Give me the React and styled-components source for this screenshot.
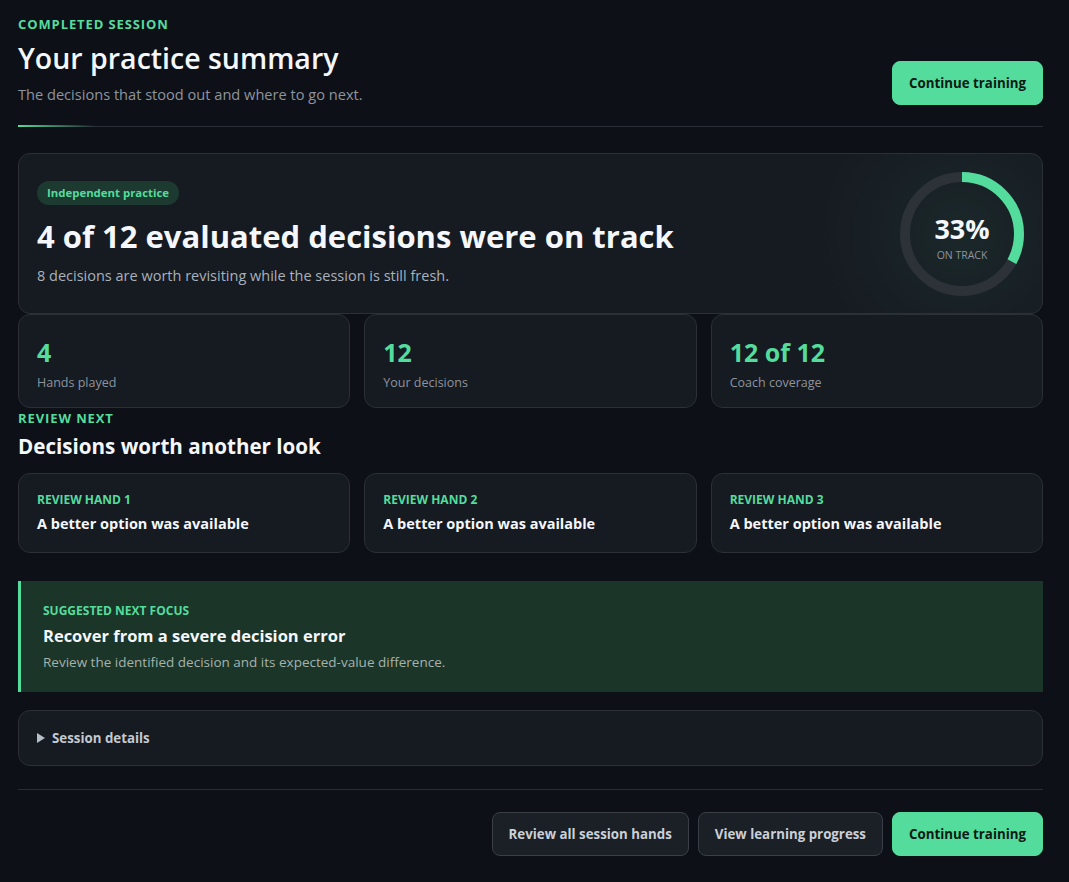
import React from "react";
import styled, { createGlobalStyle } from "styled-components";

const GlobalStyle = createGlobalStyle`
  * { box-sizing: border-box; }
  body {
    margin: 0;
    background: #0d1017;
    color: #f4f7fb;
    font-family: "Segoe UI", "Open Sans", "Noto Sans", sans-serif;
  }
`;

const green = "#54dc9d";

const Page = styled.main`
  padding: 14px 26px 26px 18px;
`;

const Header = styled.header`
  position: relative;
  display: flex;
  justify-content: space-between;
  align-items: flex-end;
  padding-bottom: 22px;
  border-bottom: 1px solid #2a2e36;
  &::after {
    content: "";
    position: absolute;
    left: 0;
    bottom: -1px;
    width: 78px;
    height: 2px;
    background: linear-gradient(90deg, ${green}, rgba(84, 220, 157, 0));
  }
`;

const Eyebrow = styled.div`
  color: ${green};
  font-size: 13px;
  font-weight: 700;
  letter-spacing: 0.9px;
  line-height: 20px;
  text-transform: uppercase;
`;

const Title = styled.h1`
  margin: 5px 0 7px;
  font-size: 28.5px;
  font-weight: 600;
  line-height: 38px;
`;

const Subtitle = styled.p`
  margin: 0;
  font-size: 14.6px;
  line-height: 20px;
  color: #8d949e;
`;

const Button = styled.button`
  height: 44px;
  margin-bottom: -1px;
  padding: 0 16px;
  border-radius: 8px;
  font-family: inherit;
  font-size: 13.3px;
  font-weight: 700;
  cursor: pointer;
  border: 1px solid ${(p) => (p.$primary ? green : "#3a3f47")};
  background: ${(p) => (p.$primary ? green : "#1b1f26")};
  color: ${(p) => (p.$primary ? "#0c1a13" : "#c9d0d8")};
`;

const Card = styled.section`
  background: #161a21;
  border: 1px solid #2a2f38;
  border-radius: 12px;
`;

const Hero = styled(Card)`
  margin-top: 26px;
  display: flex;
  align-items: center;
  justify-content: space-between;
  padding: 18px 18px 17px;
  background: radial-gradient(circle at 92% 50%, rgba(84, 220, 157, 0.07), rgba(84, 220, 157, 0) 150px), #161a21;
`;

const HeroBody = styled.div`
  display: flex;
  flex-direction: column;
  align-items: flex-start;
`;

const Badge = styled.span`
  height: 24px;
  padding: 0 10px;
  border-radius: 12px;
  background: #1c3a30;
  color: ${green};
  font-size: 11.4px;
  font-weight: 700;
  line-height: 24px;
`;

const HeroTitle = styled.h2`
  margin: 11px 0 9px;
  font-size: 31px;
  font-weight: 700;
  line-height: 40px;
`;

const HeroText = styled.p`
  margin: 0;
  font-size: 14.5px;
  line-height: 22px;
  color: #a9b1bb;
`;

const Ring = styled.div`
  position: relative;
  width: 124px;
  height: 124px;
  flex-shrink: 0;
`;

const RingLabel = styled.div`
  position: absolute;
  inset: 0;
  padding-top: 6px;
  display: flex;
  flex-direction: column;
  align-items: center;
  justify-content: center;
  strong {
    font-size: 27px;
    font-weight: 700;
    line-height: 32px;
  }
  span {
    margin-top: 3px;
    font-size: 10.5px;
    color: #8d949e;
    text-transform: uppercase;
    line-height: 14px;
  }
`;

const Grid = styled.div`
  display: grid;
  grid-template-columns: repeat(3, 1fr);
  gap: 14px;
`;

const StatCard = styled(Card)`
  padding: 22px 18px 15px;
`;

const StatValue = styled.div`
  color: ${green};
  font-size: 25px;
  font-weight: 700;
  line-height: 30px;
`;

const StatLabel = styled.div`
  margin-top: 7px;
  font-size: 12.5px;
  line-height: 18px;
  color: #8d949e;
`;

const SectionTitle = styled.h3`
  margin: 4px 0 13px;
  font-size: 20.6px;
  font-weight: 700;
  line-height: 28px;
`;

const ReviewCard = styled(Card)`
  padding: 18px;
`;

const SmallLabel = styled.div`
  color: ${green};
  font-size: 12px;
  font-weight: 700;
  line-height: 16px;
  text-transform: uppercase;
`;

const ReviewText = styled.div`
  margin-top: 6px;
  font-size: 14.5px;
  font-weight: 700;
  line-height: 20px;
`;

const Focus = styled.section`
  margin-top: 28px;
  padding: 22px 24px 20px 22px;
  background: #1b3528;
  border-left: 3px solid ${green};
`;

const FocusTitle = styled.div`
  margin-top: 6px;
  font-size: 16.5px;
  font-weight: 700;
  line-height: 22px;
`;

const FocusText = styled.p`
  margin: 5px 0 0;
  font-size: 13.5px;
  line-height: 20px;
  color: #a6b2ac;
`;

const Details = styled.details`
  margin-top: 18px;
  background: #161a21;
  border: 1px solid #2a2f38;
  border-radius: 12px;
  summary {
    list-style: none;
    display: flex;
    align-items: center;
    gap: 7px;
    padding: 17px 18px;
    font-size: 13.3px;
    font-weight: 700;
    line-height: 20px;
    color: #c3c9d0;
    cursor: pointer;
  }
  summary::-webkit-details-marker { display: none; }
  summary::before {
    content: "";
    border-left: 8px solid #b8bec6;
    border-top: 5px solid transparent;
    border-bottom: 5px solid transparent;
  }
`;

const Footer = styled.footer`
  margin-top: 23px;
  padding-top: 22px;
  border-top: 1px solid #2a2e36;
  display: flex;
  justify-content: flex-end;
  gap: 9px;
`;

const stats = [
  { value: "4", label: "Hands played" },
  { value: "12", label: "Your decisions" },
  { value: "12 of 12", label: "Coach coverage" },
];

function ProgressRing({ percent }) {
  const r = 57;
  const c = 2 * Math.PI * r;
  return (
    <Ring>
      <svg width="124" height="124" viewBox="0 0 124 124">
        <circle cx="62" cy="62" r={r} fill="none" stroke="#2d3239" strokeWidth="10" />
        <circle
          cx="62"
          cy="62"
          r={r}
          fill="none"
          stroke={green}
          strokeWidth="10"
          strokeDasharray={`${(c * percent) / 100} ${c}`}
          transform="rotate(-90 62 62)"
        />
      </svg>
      <RingLabel>
        <strong>{percent}%</strong>
        <span>On track</span>
      </RingLabel>
    </Ring>
  );
}

export default function App() {
  return (
    <Page>
      <GlobalStyle />
      <Header>
        <div>
          <Eyebrow>Completed session</Eyebrow>
          <Title>Your practice summary</Title>
          <Subtitle>The decisions that stood out and where to go next.</Subtitle>
        </div>
        <Button $primary>Continue training</Button>
      </Header>

      <Hero>
        <HeroBody>
          <Badge>Independent practice</Badge>
          <HeroTitle>4 of 12 evaluated decisions were on track</HeroTitle>
          <HeroText>8 decisions are worth revisiting while the session is still fresh.</HeroText>
        </HeroBody>
        <ProgressRing percent={33} />
      </Hero>

      <Grid>
        {stats.map((s) => (
          <StatCard key={s.label}>
            <StatValue>{s.value}</StatValue>
            <StatLabel>{s.label}</StatLabel>
          </StatCard>
        ))}
      </Grid>

      <Eyebrow>Review next</Eyebrow>
      <SectionTitle>Decisions worth another look</SectionTitle>
      <Grid>
        {[1, 2, 3].map((n) => (
          <ReviewCard key={n}>
            <SmallLabel>Review hand {n}</SmallLabel>
            <ReviewText>A better option was available</ReviewText>
          </ReviewCard>
        ))}
      </Grid>

      <Focus>
        <SmallLabel>Suggested next focus</SmallLabel>
        <FocusTitle>Recover from a severe decision error</FocusTitle>
        <FocusText>Review the identified decision and its expected-value difference.</FocusText>
      </Focus>

      <Details>
        <summary>Session details</summary>
      </Details>

      <Footer>
        <Button>Review all session hands</Button>
        <Button>View learning progress</Button>
        <Button $primary>Continue training</Button>
      </Footer>
    </Page>
  );
}
